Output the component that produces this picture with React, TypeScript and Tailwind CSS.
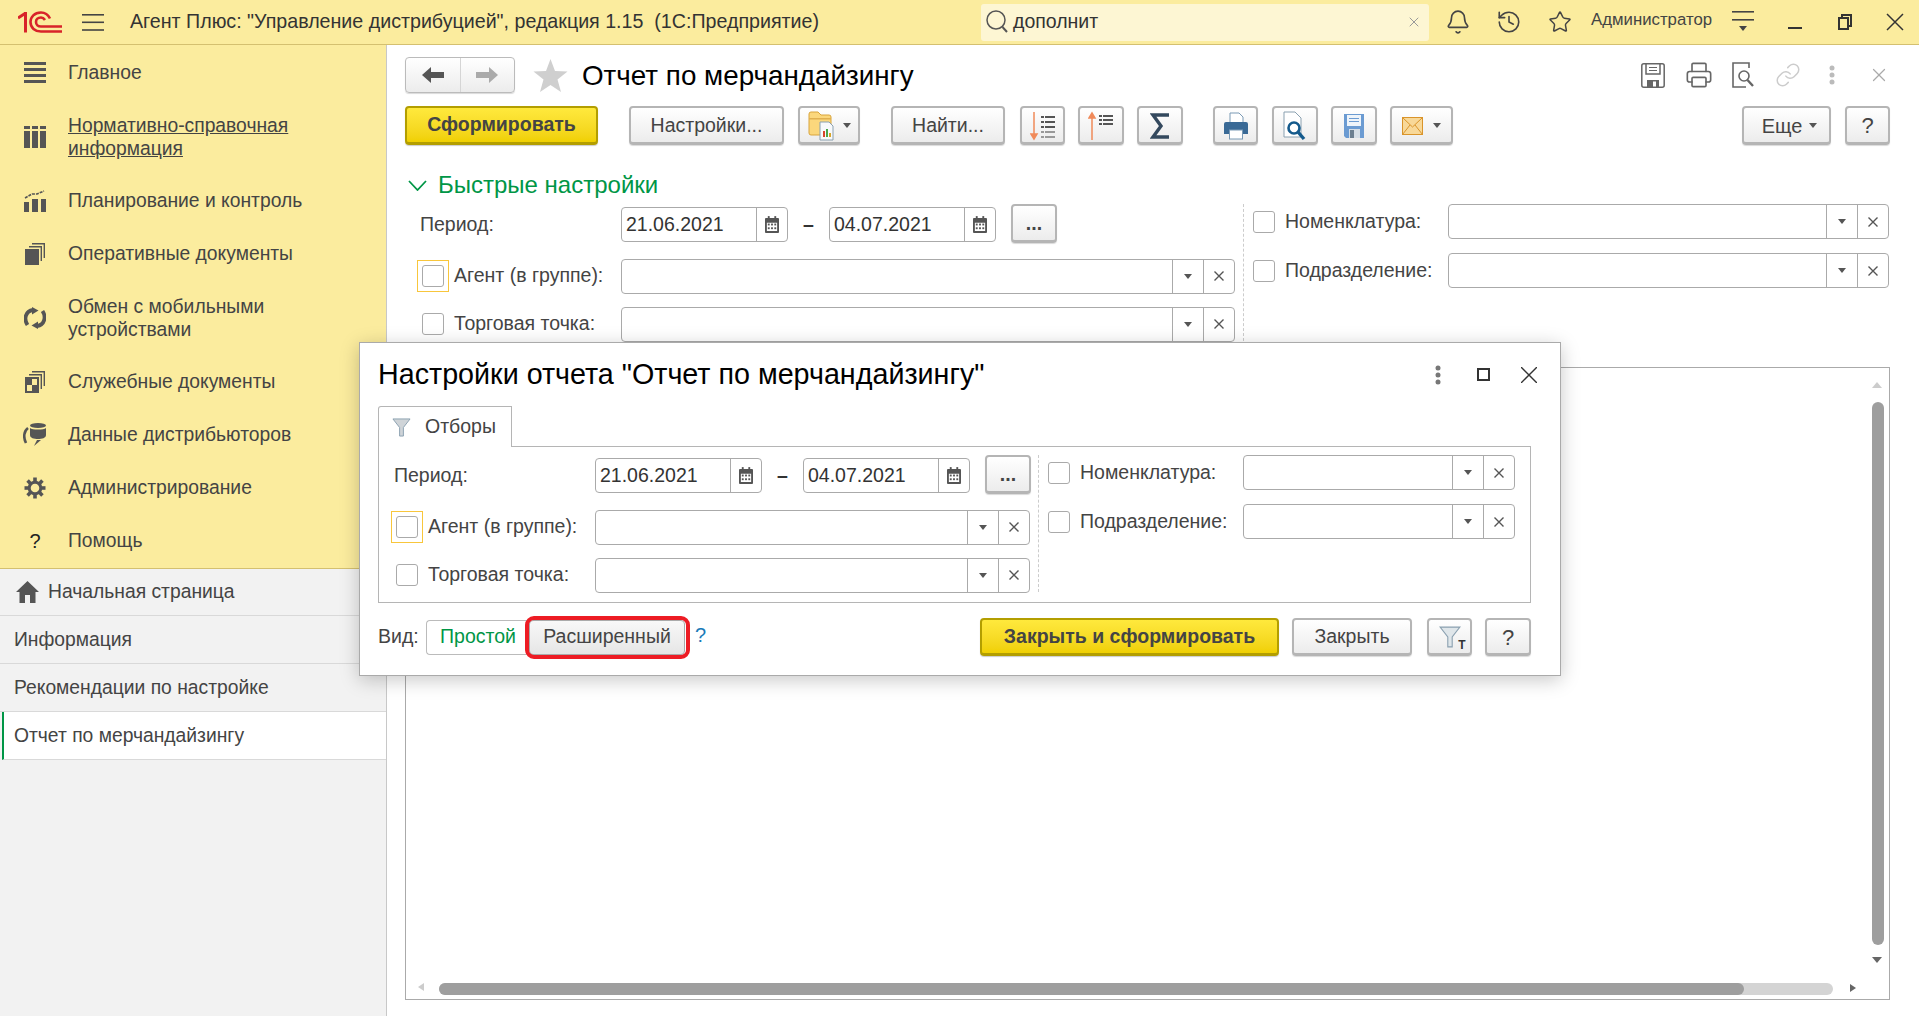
import React from 'react';
import { Bell, History, Star, Link, Printer, X } from 'lucide-react';

const Logo = () => (
  <svg width="44" height="22" viewBox="0 0 44 22" fill="none" stroke="#d8232a" strokeWidth="2.6">
    <path d="M0 7 L7 2.5 M7.5 1 V21.5" strokeWidth="3" />
    <path d="M32 7.5 C30 3.5 27 1.5 23 1.5 C16.5 1.5 12.5 6 12.5 11 C12.5 17 17 20.5 23 20.5 L44 20.5" />
    <path d="M27 9 C26 7.5 25 6.5 23 6.5 C20 6.5 18 8.5 18 11 C18 13.5 20 15.5 23 15.5 L44 15.5" />
  </svg>
);

const Bars = () => (
  <svg width="22" height="21" viewBox="0 0 22 21" fill="#555">
    <rect y="0" width="22" height="3" /><rect y="6" width="22" height="3" /><rect y="12" width="22" height="3" /><rect y="18" width="22" height="3" />
  </svg>
);

const TableIcon = () => (
  <svg width="22" height="22" viewBox="0 0 22 22" fill="#555">
    <rect y="0" width="6" height="3" /><rect x="8" width="6" height="3" /><rect x="16" width="6" height="3" />
    <rect y="5" width="6" height="17" /><rect x="8" y="5" width="6" height="17" /><rect x="16" y="5" width="6" height="17" />
  </svg>
);

const ChartIcon = () => (
  <svg width="22" height="22" viewBox="0 0 22 22" fill="#555">
    <rect y="12" width="5" height="10" /><rect x="8" y="9" width="6" height="13" /><rect x="17" y="9" width="5" height="13" />
    <path d="M1 8 L8 4 L13 4 L20 1" fill="none" stroke="#555" strokeWidth="1.6" strokeDasharray="3 1" />
  </svg>
);

const DocsIcon = ({ checker }: { checker?: boolean }) => (
  <svg width="20" height="22" viewBox="0 0 20 22" fill="none" stroke="#555" strokeWidth="1.4">
    <path d="M7 .7 H19.3 V15" /><path d="M4 3.7 H16.3 V18" />
    <rect x="0" y="6" width="14" height="16" fill="#555" stroke="none" />
    {checker && <rect x="7" y="8" width="5" height="6" fill="#fbec9e" stroke="none" />}
    {checker && <rect x="2" y="14" width="5" height="6" fill="#fbec9e" stroke="none" />}
  </svg>
);

const SyncIcon = () => (
  <svg width="22" height="22" viewBox="0 0 22 22" fill="#555">
    <path d="M3.5 18 C-0.5 12 1.5 4 9 3" fill="none" stroke="#555" strokeWidth="3.8" />
    <path d="M8 0 L14.5 3.5 L8 7.5 Z" />
    <path d="M18.5 4 C22.5 10 20.5 18 13 19" fill="none" stroke="#555" strokeWidth="3.8" />
    <path d="M14 14.5 L7.5 18.5 L14 22 Z" />
  </svg>
);

const DataIcon = () => (
  <svg width="24" height="23" viewBox="0 0 24 23" fill="#555">
    <ellipse cx="15" cy="2.5" rx="8" ry="2.5" />
    <path d="M7 5 C9 7 21 7 23 5 V12 C23 15 19 16 15 16 C11 16 7 15 7 12 Z" />
    <path d="M5 5 C1 8 0 14 3 20" fill="none" stroke="#555" strokeWidth="2.6" />
    <path d="M11 23 L14 17 L18 17 Z" />
  </svg>
);

const GearIcon = () => (
  <svg width="22" height="22" viewBox="-11 -11 22 22" fill="none" stroke="#555">
    <circle r="5.8" strokeWidth="3" />
    {[0, 45, 90, 135, 180, 225, 270, 315].map((a) => (
      <path key={a} d="M0 -6.5 V-10.5" strokeWidth="3.6" transform={`rotate(${a})`} />
    ))}
  </svg>
);

const HomeIcon = () => (
  <svg width="23" height="22" viewBox="0 0 23 22" fill="#555">
    <path d="M11.5 0 L23 11 H19.5 V22 H14 V14 H9 V22 H3.5 V11 H0 Z" />
  </svg>
);

const HeaderMenu = () => (
  <svg width="22" height="22" viewBox="0 0 22 22" fill="#444">
    <rect y="0" width="22" height="1.6" /><rect y="8" width="22" height="1.6" />
    <path d="M7 15 H15 L11 20 Z" />
  </svg>
);

const Triangle = () => (
  <svg width="8" height="5" viewBox="0 0 8 5" fill="#555"><path d="M0 0 H8 L4 5 Z" /></svg>
);

const SmallX = () => (
  <svg width="10" height="10" viewBox="0 0 10 10" stroke="#555" strokeWidth="1.4"><path d="M.5 .5 L9.5 9.5 M9.5 .5 L.5 9.5" /></svg>
);

const CalendarIcon = () => (
  <svg width="14" height="17" viewBox="0 0 15 18" fill="#555">
    <rect x="3" y="0" width="2" height="4" /><rect x="10" y="0" width="2" height="4" />
    <path fillRule="evenodd" d="M1 2 H14 A1 1 0 0 1 15 3 V17 A1 1 0 0 1 14 18 H1 A1 1 0 0 1 0 17 V3 A1 1 0 0 1 1 2 Z M2 7 V16 H13 V7 Z" />
    <rect x="3" y="8" width="2" height="2" /><rect x="6.5" y="8" width="2" height="2" /><rect x="10" y="8" width="2" height="2" />
    <rect x="3" y="12" width="2" height="2" /><rect x="6.5" y="12" width="2" height="2" /><rect x="10" y="12" width="2" height="2" />
  </svg>
);

const FolderIcon = () => (
  <svg width="30" height="30" viewBox="0 0 30 30">
    <path d="M1 3 Q1 1 3 1 H10 L13 4 H21 Q23 4 23 6 V24 H3 Q1 24 1 22 Z" fill="#fbd77c" stroke="#d9a53c" />
    <rect x="1" y="7" width="22" height="1.5" fill="#e0b050" />
    <path d="M12 11 H21 L25 15 V29 H12 Z" fill="#f7f9fb" stroke="#8aa0b0" />
    <rect x="15" y="20" width="2" height="6" fill="#d8432a" /><rect x="18" y="18" width="2" height="8" fill="#4aa54a" /><rect x="21" y="22" width="2" height="4" fill="#d8a52a" />
  </svg>
);

const Lines = ({ rows, fill }: { rows: number[]; fill: string }) => (
  <>
    {rows.map((y) => (
      <g key={y}>
        <rect x="11" y={y} width="3" height="2" fill={fill} />
        <rect x="15" y={y} width="10" height="2" fill={fill} />
      </g>
    ))}
  </>
);

const SortDown = () => (
  <svg width="26" height="30" viewBox="0 0 26 30">
    <path d="M4 1 V27 M1 23 L4 28 L7 23 Z" stroke="#f08a5a" strokeWidth="1.5" fill="#f08a5a" />
    <Lines rows={[5, 10, 15]} fill="#555" />
    <Lines rows={[20, 25]} fill="#999" />
  </svg>
);

const SortUp = () => (
  <svg width="26" height="30" viewBox="0 0 26 30">
    <path d="M4 29 V3 M1 7 L4 2 L7 7 Z" stroke="#f08a5a" strokeWidth="1.5" fill="#f08a5a" />
    <Lines rows={[4, 8, 12]} fill="#555" />
  </svg>
);

const Sigma = () => (
  <svg width="20" height="26" viewBox="0 0 20 26" fill="none" stroke="#34495e" strokeWidth="3.4">
    <path d="M19 2 H3 L11 13 L3 24 H19" />
  </svg>
);

const ColorPrinter = () => (
  <svg width="24" height="28" viewBox="0 0 24 28">
    <path d="M6 1 H15 L19 5 V12 H6 Z" fill="#fff" stroke="#7a9ab5" />
    <path d="M2 10 H22 Q24 10 24 12 V22 H19 V18 H5 V22 H0 V12 Q0 10 2 10 Z" fill="#3a6a96" />
    <rect x="5.5" y="18" width="13" height="9" fill="#fff" stroke="#7a9ab5" />
  </svg>
);

const ColorPreview = () => (
  <svg width="24" height="30" viewBox="0 0 24 30">
    <path d="M1 1 H12 L18 7 V26 H1 Z" fill="#fff" stroke="#8aa0b0" />
    <circle cx="11" cy="17" r="5.5" fill="#fff" stroke="#145a8c" strokeWidth="2.6" />
    <path d="M15 21 L21 28" stroke="#145a8c" strokeWidth="3.4" />
  </svg>
);

const ColorSave = () => (
  <svg width="20" height="24" viewBox="0 0 20 24">
    <path d="M0 0 H20 V24 H2 L0 22 Z" fill="#6b9bd2" />
    <rect x="3" y="1" width="14" height="11" fill="#eef4fa" />
    <rect x="5" y="4" width="10" height="1" fill="#6b9bd2" /><rect x="5" y="7" width="10" height="1" fill="#6b9bd2" />
    <rect x="5" y="15" width="11" height="9" fill="#d5dee6" /><rect x="6" y="16" width="4" height="8" fill="#6b7f90" />
  </svg>
);

const Mail = () => (
  <svg width="21" height="18" viewBox="0 0 21 18">
    <rect x=".5" y=".5" width="20" height="17" fill="#f8d898" stroke="#d9942a" />
    <path d="M.5 .5 L10.5 10 L20.5 .5 M.5 17.5 L8 8 M20.5 17.5 L13 8" fill="none" stroke="#d9942a" />
  </svg>
);

const GraySave = () => (
  <svg width="24" height="25" viewBox="0 0 24 25" fill="none" stroke="#666" strokeWidth="1.5">
    <rect x=".8" y=".8" width="22.4" height="23.4" rx="2" />
    <path d="M5 1 V11 H19 V1" />
    <path d="M8 4.5 H16 M8 7.5 H16" strokeWidth="1.2" />
    <rect x="6" y="17" width="12" height="7" fill="#666" stroke="none" />
    <rect x="12" y="18.5" width="3" height="5" fill="#fff" stroke="none" />
  </svg>
);

const GrayPreview = () => (
  <svg width="22" height="26" viewBox="0 0 22 26" fill="none" stroke="#666" strokeWidth="1.6">
    <path d="M14 25 H1 V1 H17 V6" />
    <circle cx="12" cy="14" r="5" />
    <path d="M15.5 18 L21 24" strokeWidth="2.4" />
  </svg>
);

const BigStar = () => (
  <svg width="35" height="33" viewBox="0 0 34 33" fill="#cfcfcf">
    <path d="M17 0 L21.5 12 L34 12.5 L24 20.5 L27.5 33 L17 26 L6.5 33 L10 20.5 L0 12.5 L12.5 12 Z" />
  </svg>
);

const Funnel = ({ color, w }: { color: string; w: number }) => (
  <svg width={w} height={w} viewBox="0 0 20 20">
    <path d="M1 1 H19 L12 10 V19 H8 V10 Z" fill={color} stroke="#8aa0b0" strokeWidth="1" />
  </svg>
);

const Dots = ({ color }: { color: string }) => (
  <svg width="6" height="20" viewBox="0 0 6 20" fill={color}>
    <circle cx="3" cy="3" r="2.5" /><circle cx="3" cy="10" r="2.5" /><circle cx="3" cy="17" r="2.5" />
  </svg>
);

const btnBase = 'flex shrink-0 items-center justify-center rounded-[4px] border-2 border-b-[3px] border-[#b5b5b5] bg-gradient-to-b from-white to-[#ececec] pt-px text-[19.5px] text-[#444] shadow-[0_1px_1px_rgba(0,0,0,0.15)]';
const yellowBtn = 'flex shrink-0 items-center justify-center rounded-[4px] border-2 border-b-[3px] border-[#b39e00] bg-gradient-to-b from-[#ffe93c] to-[#f0d000] text-[19.5px] font-bold text-[#444] shadow-[0_1px_1px_rgba(0,0,0,0.2)]';

function Check() {
  return <div className="h-[22px] w-[22px] shrink-0 rounded-[3px] border border-[#aaa] bg-white" />;
}

function DateField({ value }: { value: string }) {
  return (
    <div className="mt-[2px] flex h-[35px] w-[167px] shrink-0 items-center rounded-[4px] border border-[#aaa] bg-white">
      <span className="flex-1 pl-[4px] text-[19.5px] text-[#333]">{value}</span>
      <span className="flex h-full w-[31px] items-center justify-center border-l border-[#aaa]"><CalendarIcon /></span>
    </div>
  );
}

function Select({ className }: { className: string }) {
  return (
    <div className={`flex h-[35px] shrink-0 items-center rounded-[4px] border border-[#aaa] bg-white ${className}`}>
      <span className="flex-1" />
      <span className="flex h-full w-[31px] items-center justify-center border-l border-[#aaa]"><Triangle /></span>
      <span className="flex h-full w-[31px] items-center justify-center border-l border-[#aaa]"><SmallX /></span>
    </div>
  );
}

// одна и та же форма отборов в отчете и в диалоге настроек
function Filters({ leftW, selectW, rightW }: { leftW: string; selectW: string; rightW: string }) {
  const label = 'text-[19.5px] text-[#444]';
  return (
    <div className="flex">
      <div className={`flex shrink-0 flex-col ${leftW}`}>
        <div className="flex h-[39px] items-center">
          <span className={`w-[216px] shrink-0 pl-[15px] pt-[3px] ${label}`}>Период:</span>
          <DateField value="21.06.2021" />
          <span className="w-[41px] shrink-0 pt-[3px] text-center text-[19.5px] font-bold text-[#333]">–</span>
          <DateField value="04.07.2021" />
          <button className={`ml-[15px] h-[39px] w-[46px] font-bold ${btnBase}`}>...</button>
        </div>
        <div className="mt-[16px] flex h-[34px] items-center">
          <span className="ml-[12px] flex h-[32px] w-[32px] shrink-0 items-center justify-center border border-[#f8c63c]"><Check /></span>
          <span className={`ml-[5px] w-[167px] shrink-0 whitespace-nowrap ${label}`}>Агент (в группе):</span>
          <Select className={selectW} />
        </div>
        <div className="mt-[14px] flex h-[34px] items-center">
          <span className="ml-[17px]"><Check /></span>
          <span className={`ml-[10px] w-[167px] shrink-0 whitespace-nowrap ${label}`}>Торговая точка:</span>
          <Select className={selectW} />
        </div>
      </div>
      <div className="mx-[8px] w-0 shrink-0 border-l border-dashed border-[#ccc]" />
      <div className="flex flex-col gap-[14px] pl-[1px]">
        <div className="flex h-[35px] items-center">
          <Check />
          <span className={`ml-[10px] w-[162.5px] shrink-0 ${label}`}>Номенклатура:</span>
          <Select className={rightW} />
        </div>
        <div className="flex h-[35px] items-center">
          <Check />
          <span className={`ml-[10px] w-[162.5px] shrink-0 ${label}`}>Подразделение:</span>
          <Select className={rightW} />
        </div>
      </div>
    </div>
  );
}

const navItems: { icon: React.ReactNode; lines: string[]; h: string; underline?: boolean }[] = [
  { icon: <Bars />, lines: ['Главное'], h: 'h-[53px]' },
  { icon: <TableIcon />, lines: ['Нормативно-справочная', 'информация'], h: 'h-[75px]', underline: true },
  { icon: <ChartIcon />, lines: ['Планирование и контроль'], h: 'h-[53px]' },
  { icon: <DocsIcon />, lines: ['Оперативные документы'], h: 'h-[53px]' },
  { icon: <SyncIcon />, lines: ['Обмен с мобильными', 'устройствами'], h: 'h-[75px]' },
  { icon: <DocsIcon checker />, lines: ['Служебные документы'], h: 'h-[53px]' },
  { icon: <DataIcon />, lines: ['Данные дистрибьюторов'], h: 'h-[53px]' },
  { icon: <GearIcon />, lines: ['Администрирование'], h: 'h-[53px]' },
  { icon: <span className="text-[20px] text-[#222]">?</span>, lines: ['Помощь'], h: 'h-[53px]' },
];

export default function App() {
  return (
    <div className="relative flex h-[1016px] w-[1919px] flex-col overflow-hidden bg-white font-['Liberation_Sans',Arial,sans-serif]">
      <header className="flex h-[45px] shrink-0 items-center border-b border-[#d4c070] bg-[#fbec9e] text-[#444]">
        <span className="ml-[18px]"><Logo /></span>
        <svg className="ml-[20px]" width="22" height="17" viewBox="0 0 22 17" fill="#444">
          <rect y="0" width="22" height="1.6" /><rect y="7.5" width="22" height="1.6" /><rect y="15.2" width="22" height="1.6" />
        </svg>
        <span className="ml-[26px] w-[851px] whitespace-pre text-[19.65px] text-[#333]">Агент Плюс: "Управление дистрибуцией", редакция 1.15  (1С:Предприятие)</span>
        <div className="flex h-[37px] w-[448px] items-center rounded-[3px] bg-[#fdf6d3] pl-[4px] pr-[7px]">
          <svg width="24" height="26" viewBox="0 0 24 26" fill="none" stroke="#555" strokeWidth="1.5">
            <circle cx="11" cy="11" r="9" /><path d="M17.5 18 L22 23" strokeWidth="2" />
          </svg>
          <span className="ml-[4px] flex-1 text-[19.5px] text-[#333]">дополнит</span>
          <X size={16} color="#999" strokeWidth={1.5} />
        </div>
        <span className="ml-[16px]"><Bell size={26} strokeWidth={1.5} color="#444" /></span>
        <span className="ml-[25px]"><History size={26} strokeWidth={1.5} color="#444" /></span>
        <span className="ml-[26px]"><Star size={24} strokeWidth={1.5} color="#444" /></span>
        <span className="ml-[19px] w-[120px] whitespace-nowrap pb-[4px] text-[16.8px] text-[#444]">Администратор</span>
        <span className="ml-[21px]"><HeaderMenu /></span>
        <span className="ml-[34px] mt-[12px] block h-[2px] w-[14px] bg-[#333]" />
        <svg className="ml-[36px]" width="14" height="16" viewBox="0 0 14 16" fill="none" stroke="#333" strokeWidth="2">
          <rect x="1" y="4" width="9" height="11" /><path d="M4 4 V1 H13 V12 H10" />
        </svg>
        <svg className="ml-[34px]" width="18" height="18" viewBox="0 0 18 18" stroke="#333" strokeWidth="1.5"><path d="M1 1 L17 17 M17 1 L1 17" /></svg>
      </header>

      <div className="flex min-h-0 flex-1">
        <aside className="flex w-[387px] shrink-0 flex-col border-r border-[#c8c8c8] bg-[#f2f2f2] text-[19.3px] text-[#444]">
          <nav className="flex h-[524px] flex-col border-b border-[#d4c070] bg-[#fbec9e] pt-[1px]">
            {navItems.map((item) => (
              <div key={item.lines[0]} className={`flex items-center ${item.h}`}>
                <span className="flex w-[68px] shrink-0 justify-center pl-[2px]">{item.icon}</span>
                <div className={`leading-[23px] ${item.underline ? 'underline' : ''}`}>
                  {item.lines.map((l) => <div key={l}>{l}</div>)}
                </div>
              </div>
            ))}
          </nav>
          <div className="flex h-[47px] items-center border-b border-[#d9d9d9] pl-[16px]">
            <HomeIcon />
            <span className="ml-[9px] pt-px">Начальная страница</span>
          </div>
          <div className="flex h-[48px] items-center border-b border-[#d9d9d9] pl-[14px] pt-[2px]">Информация</div>
          <div className="flex h-[48px] items-center border-b border-[#d9d9d9] pl-[14px] pt-[2px]">Рекомендации по настройке</div>
          <div className="ml-[2px] flex h-[48px] items-center border-b border-l-2 border-[#d9d9d9] border-l-[#009646] bg-white pl-[10px] pt-[2px]">Отчет по мерчандайзингу</div>
        </aside>

        <main className="flex min-w-0 flex-1 flex-col pl-[18px] pr-[29px]">
          <div className="mt-[12px] flex h-[36px] items-center">
            <div className="flex h-[36px] w-[110px] rounded-[4px] border border-[#bbb] bg-gradient-to-b from-white to-[#ececec] shadow-[0_1px_1px_rgba(0,0,0,0.15)]">
              <span className="flex flex-1 items-center justify-center border-r border-[#d5d5d5]">
                <svg width="22" height="16" viewBox="0 0 22 16" fill="#555"><path d="M0 8 L9 0 V5 H22 V11 H9 V16 Z" /></svg>
              </span>
              <span className="flex flex-1 items-center justify-center">
                <svg width="22" height="16" viewBox="0 0 22 16" fill="#aaa"><path d="M22 8 L13 0 V5 H0 V11 H13 V16 Z" /></svg>
              </span>
            </div>
            <span className="ml-[18px]"><BigStar /></span>
            <h1 className="ml-[14px] pt-px text-[27.8px] font-normal text-black">Отчет по мерчандайзингу</h1>
            <div className="ml-auto flex items-center">
              <GraySave />
              <span className="ml-[20px]"><Printer size={28} strokeWidth={1.4} color="#666" /></span>
              <span className="ml-[19px]"><GrayPreview /></span>
              <span className="ml-[21px]"><Link size={26} strokeWidth={1.4} color="#ccc" /></span>
              <span className="ml-[28px]"><Dots color="#bbb" /></span>
              <span className="ml-[33px]"><X size={22} strokeWidth={1.3} color="#aaa" /></span>
            </div>
          </div>

          <div className="mt-[13px] flex h-[39px] items-center">
            <button className={`h-[39px] w-[193px] ${yellowBtn}`}>Сформировать</button>
            <button className={`ml-[31px] h-[39px] w-[155px] ${btnBase}`}>Настройки...</button>
            <button className={`ml-[14px] h-[39px] w-[62px] gap-[5px] ${btnBase}`}><FolderIcon /><Triangle /></button>
            <button className={`ml-[31px] h-[39px] w-[114px] ${btnBase}`}>Найти...</button>
            <button className={`ml-[15px] h-[39px] w-[45px] ${btnBase}`}><SortDown /></button>
            <button className={`ml-[13px] h-[39px] w-[46px] ${btnBase}`}><SortUp /></button>
            <button className={`ml-[13px] h-[39px] w-[46px] ${btnBase}`}><Sigma /></button>
            <button className={`ml-[30px] h-[39px] w-[45px] ${btnBase}`}><ColorPrinter /></button>
            <button className={`ml-[14px] h-[39px] w-[46px] ${btnBase}`}><ColorPreview /></button>
            <button className={`ml-[13px] h-[39px] w-[46px] ${btnBase}`}><ColorSave /></button>
            <button className={`ml-[13px] h-[39px] w-[63px] gap-[10px] ${btnBase}`}><Mail /><Triangle /></button>
            <button className={`ml-auto h-[39px] w-[89px] gap-[7px] pl-[6px] text-[20px] ${btnBase}`}>Еще <Triangle /></button>
            <button className={`ml-[14px] h-[39px] w-[45px] text-[22px] text-[#222] ${btnBase}`}>?</button>
          </div>

          <div className="mt-[26px] flex h-[28px] items-center text-[24px] text-[#009646]">
            <svg className="ml-[3px]" width="19" height="11" viewBox="0 0 19 11" fill="none" stroke="#009646" strokeWidth="1.8"><path d="M1 1 L9.5 10 L18 1" /></svg>
            <span className="ml-[11px]">Быстрые настройки</span>
          </div>

          <div className="mt-[5px]">
            <Filters leftW="w-[830px]" selectW="w-[614px]" rightW="w-[441px]" />
          </div>

          <div className="relative mb-[16px] mt-[26px] flex-1 border border-[#aaa]">
            <span className="absolute right-[7px] top-[14px] h-0 w-0 border-x-[5px] border-b-[6px] border-x-transparent border-b-[#ccc]" />
            <span className="absolute right-[5px] top-[34px] h-[543px] w-[12px] rounded-full bg-[#9e9e9e]" />
            <span className="absolute bottom-[36px] right-[7px] h-0 w-0 border-x-[5px] border-t-[6px] border-x-transparent border-t-[#666]" />
            <span className="absolute bottom-[8px] left-[12px] h-0 w-0 border-y-[4px] border-r-[6px] border-y-transparent border-r-[#ccc]" />
            <div className="absolute bottom-[4px] left-[33px] h-[12px] w-[1394px] rounded-full bg-[#d4d4d4]">
              <div className="h-full w-[1305px] rounded-full bg-[#9e9e9e]" />
            </div>
            <span className="absolute bottom-[7px] right-[33px] h-0 w-0 border-y-[4px] border-l-[6px] border-y-transparent border-l-[#666]" />
          </div>
        </main>
      </div>

      {/* модальный диалог настроек поверх формы */}
      <div className="absolute left-[359px] top-[342px] flex h-[334px] w-[1202px] flex-col border border-[#aaa] bg-white pl-[18px] pr-[19px] shadow-[0_4px_18px_rgba(0,0,0,0.22)]">
        <div className="flex h-[63px] shrink-0 items-center">
          <h2 className="whitespace-nowrap text-[28.7px] font-normal text-black">Настройки отчета "Отчет по мерчандайзингу"</h2>
          <span className="ml-auto"><Dots color="#777" /></span>
          <span className="ml-[36px] block h-[13px] w-[13px] border-2 border-[#333]" />
          <svg className="ml-[31px] mr-[4px]" width="16" height="16" viewBox="0 0 16 16" stroke="#333" strokeWidth="1.4"><path d="M0 0 L16 16 M16 0 L0 16" /></svg>
        </div>
        <div className="relative z-10 -mb-px flex h-[41px] w-[134px] items-center rounded-tl-[3px] border border-b-0 border-[#b5b5b5] bg-white pl-[13px] text-[19.5px] text-[#444]">
          <Funnel color="#cfd4d8" w={19} />
          <span className="ml-[14px]">Отборы</span>
        </div>
        <div className="h-[157px] w-[1153px] border border-[#b5b5b5] pt-[8px]">
          <Filters leftW="w-[651px]" selectW="w-[435px]" rightW="w-[272px]" />
        </div>
        <div className="mt-[15px] flex h-[38px] w-[1153px] items-center">
          <span className="w-[48px] shrink-0 text-[19.5px] text-[#444]">Вид:</span>
          <span className="flex h-[35px] w-[103px] items-center justify-center rounded-l-[4px] border border-r-0 border-[#bbb] text-[19.5px] text-[#009646]">Простой</span>
          <span className="relative flex h-[35px] w-[156px] items-center justify-center rounded-[4px] border border-[#aaa] bg-gradient-to-b from-[#f8f8f8] to-[#e6e6e6] text-[19.5px] text-[#444]">
            Расширенный
            <span className="absolute -bottom-[5px] -left-[5px] -right-[6px] -top-[5px] rounded-[9px] border-[4px] border-[#ed1c24]" />
          </span>
          <span className="ml-[10px] pb-[4px] text-[20px] text-[#1a7ab8]">?</span>
          <button className={`ml-auto h-[38px] w-[299px] ${yellowBtn}`}>Закрыть и сформировать</button>
          <button className={`ml-[13px] h-[38px] w-[120px] ${btnBase}`}>Закрыть</button>
          <button className={`ml-[15px] h-[38px] w-[45px] ${btnBase}`}>
            <span className="relative">
              <Funnel color="#dfe6ea" w={22} />
              <span className="absolute -bottom-[3px] -right-[5px] text-[12px] font-bold leading-none text-[#333]">T</span>
            </span>
          </button>
          <button className={`ml-[13px] h-[38px] w-[46px] text-[22px] text-[#222] ${btnBase}`}>?</button>
        </div>
      </div>
    </div>
  );
}
